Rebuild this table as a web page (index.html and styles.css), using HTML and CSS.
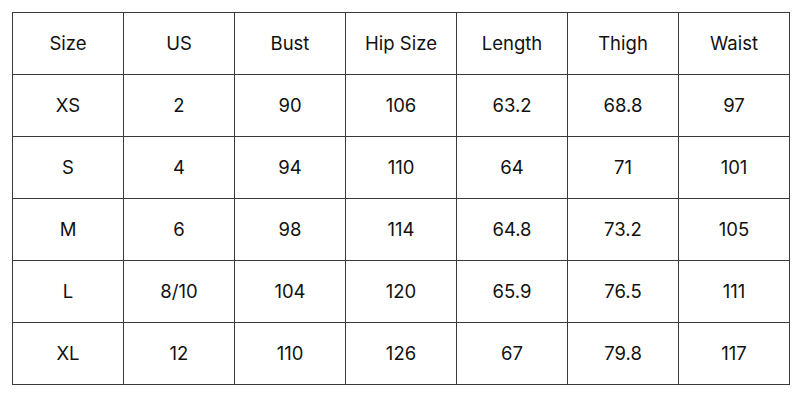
FILE: index.html
```html
<!DOCTYPE html>
<html>
<head>
<meta charset="utf-8">
<link rel="stylesheet" href="styles.css">
</head>
<body>
<table class="chart">
  <tr><td>Size</td><td>US</td><td>Bust</td><td>Hip Size</td><td>Length</td><td>Thigh</td><td>Waist</td></tr>
  <tr><td>XS</td><td>2</td><td>90</td><td>106</td><td>63.2</td><td>68.8</td><td>97</td></tr>
  <tr><td>S</td><td>4</td><td>94</td><td>110</td><td>64</td><td>71</td><td>101</td></tr>
  <tr><td>M</td><td>6</td><td>98</td><td>114</td><td>64.8</td><td>73.2</td><td>105</td></tr>
  <tr><td>L</td><td>8/10</td><td>104</td><td>120</td><td>65.9</td><td>76.5</td><td>111</td></tr>
  <tr><td>XL</td><td>12</td><td>110</td><td>126</td><td>67</td><td>79.8</td><td>117</td></tr>
</table>
</body>
</html>
```
FILE: styles.css
```css
html, body {
  margin: 0;
  background: #fff;
}
body {
  padding: 12px;
  font-family: Inter, "Open Sans", "Liberation Sans", sans-serif;
  color: #111;
}
.chart {
  border-collapse: collapse;
  table-layout: fixed;
  width: 778px;
}
.chart td {
  border: 1px solid #3a3a3a;
  height: 59px;
  padding: 0 0 2px;
  text-align: center;
  vertical-align: middle;
  font-size: 18.5px;
}
```
